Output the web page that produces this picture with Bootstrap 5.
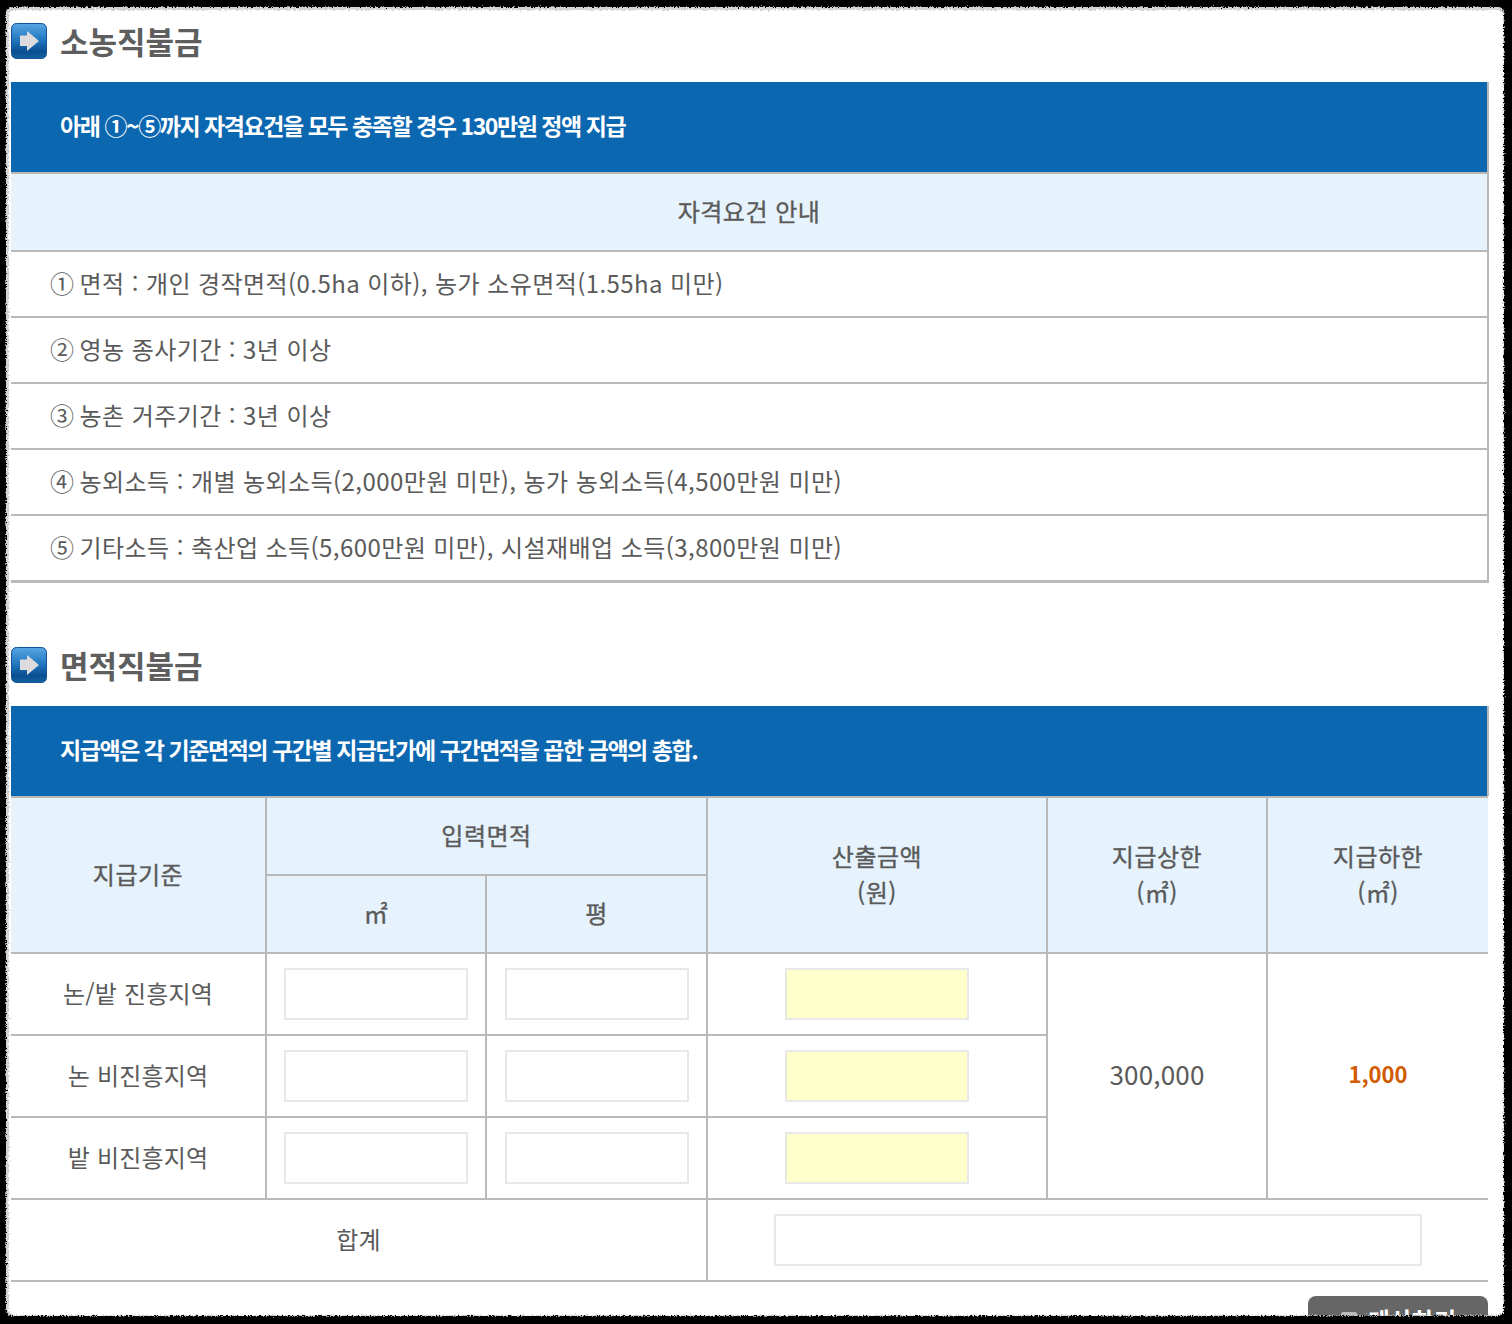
<!DOCTYPE html>
<html lang="ko">
<head>
<meta charset="utf-8">
<title>직불금 계산</title>
<link href="https://cdn.jsdelivr.net/npm/bootstrap@5.3.0/dist/css/bootstrap.min.css" rel="stylesheet">
<style>
html,body{height:1324px;overflow:hidden;background:#000;}
body{font-family:"Noto Sans CJK KR","Noto Sans",sans-serif;color:#5a5a5a;}
.sheet{margin:7px 8px 8px 6px;height:1309px;overflow:hidden;background:#fff;padding:16px 15px 0 5px;}
.edge{position:fixed;left:0;top:0;width:1512px;height:1324px;pointer-events:none;}
.sec-title{height:36px;margin-bottom:23px;gap:13px;}
.sec-title svg{width:36px;height:36px;flex:none;}
.sec-title h2{font-size:31px;font-weight:700;margin:0;color:#5e5e5e;line-height:36px;}
.sec-two{margin-top:64px;}
.notice{height:90px;background:#0c67b1;color:#fff;font-size:23px;font-weight:700;letter-spacing:-1.45px;padding:0 0 3px 49px;border-right:2px solid #b9b9b9;}
.req-table,.calc-table{table-layout:fixed;border-collapse:separate;border-spacing:0;margin:0;}
.req-table{width:100%;border-right:2px solid #b9b9b9;}
.calc-table{width:1477px;}
.req-table th,.calc-table th{background:#e6f3fd;font-size:24px;font-weight:400;letter-spacing:.5px;-webkit-text-stroke:.35px #5a5a5a;text-align:center;color:#5a5a5a;vertical-align:middle;padding:0 0 2px;}
.req-table th,.req-table td,.calc-table th,.calc-table td{border-bottom:2px solid #b9b9b9;}
.req-table th{border-top:2px solid #b9b9b9;height:80px;}
.req-table td{height:66px;font-size:24px;letter-spacing:.42px;padding:0 0 2px 39px;vertical-align:middle;color:#5a5a5a;}
.req-table tr:last-child td{border-bottom-width:3px;height:67px;}
.marker{letter-spacing:-1.6px;}
.calc-table th.head-top{border-top:2px solid #b9b9b9;}
.calc-table td{font-size:24px;letter-spacing:.2px;text-align:center;vertical-align:middle;padding:0;color:#5a5a5a;height:82px;}
.calc-table td.label-cell{padding-bottom:2px;}
.calc-table th.vline,.calc-table td.vline{border-right:2px solid #b9b9b9;}
.calc-table input.form-control{display:block;width:184px;height:52px;margin:0 auto;border:2px solid #e8e8e8;border-radius:0;background:#fff;padding:0 8px;}
.calc-table input.form-control.yellow{background:#ffffcc;}
.calc-table input.form-control.total{width:648px;margin-left:66px;}
.calc-table td.floor-val{color:#d15b00;font-weight:700;font-size:22px;letter-spacing:0;padding-bottom:6px;}
.calc-table td.ceil-val{font-size:26px;letter-spacing:.2px;padding-bottom:6px;}
.h-r1{height:80px;}
.h-r2{height:78px;}
.btn-row{margin-top:14px;width:1477px;}
.calc-btn.btn{width:180px;height:48px;background:#666;color:#fff;border:0;border-radius:8px 8px 0 0;font-size:24px;font-weight:700;padding:0;gap:10px;}
.calc-btn svg{width:18px;height:18px;}
</style>
</head>
<body>
<div class="sheet">
  <div class="sec-title d-flex align-items-center">
    <svg viewBox="0 0 36 36"><defs><linearGradient id="g1" x1="0" y1="0" x2="0" y2="1"><stop offset="0" stop-color="#58a6e4"/><stop offset=".5" stop-color="#1e74bd"/><stop offset=".8" stop-color="#0a4f90"/><stop offset="1" stop-color="#15629f"/></linearGradient><filter id="soft"><feGaussianBlur stdDeviation=".6"/></filter></defs><rect x=".5" y=".5" width="35" height="35" rx="5" fill="url(#g1)" stroke="#0d5597"/><path d="M9 12.5h7V8l12 10-12 10v-5h-7z" fill="#dcdcdc" filter="url(#soft)"/></svg>
    <h2>소농직불금</h2>
  </div>
  <div class="notice d-flex align-items-center">아래 ①~⑤까지 자격요건을 모두 충족할 경우 130만원 정액 지급</div>
  <table class="req-table">
    <thead><tr><th>자격요건 안내</th></tr></thead>
    <tbody>
      <tr><td><span class="marker">①</span> 면적 : 개인 경작면적(0.5ha 이하), 농가 소유면적(1.55ha 미만)</td></tr>
      <tr><td><span class="marker">②</span> 영농 종사기간 : 3년 이상</td></tr>
      <tr><td><span class="marker">③</span> 농촌 거주기간 : 3년 이상</td></tr>
      <tr><td><span class="marker">④</span> 농외소득 : 개별 농외소득(2,000만원 미만), 농가 농외소득(4,500만원 미만)</td></tr>
      <tr><td><span class="marker">⑤</span> 기타소득 : 축산업 소득(5,600만원 미만), 시설재배업 소득(3,800만원 미만)</td></tr>
    </tbody>
  </table>

  <div class="sec-title sec-two d-flex align-items-center">
    <svg viewBox="0 0 36 36"><rect x=".5" y=".5" width="35" height="35" rx="5" fill="url(#g1)" stroke="#0d5597"/><path d="M9 12.5h7V8l12 10-12 10v-5h-7z" fill="#dcdcdc" filter="url(#soft)"/></svg>
    <h2>면적직불금</h2>
  </div>
  <div class="notice d-flex align-items-center">지급액은 각 기준면적의 구간별 지급단가에 구간면적을 곱한 금액의 총합.</div>
  <table class="calc-table">
    <colgroup><col style="width:256px"><col style="width:220px"><col style="width:221px"><col style="width:340px"><col style="width:220px"><col></colgroup>
    <thead>
      <tr class="h-r1">
        <th rowspan="2" class="head-top vline">지급기준</th>
        <th colspan="2" class="head-top vline">입력면적</th>
        <th rowspan="2" class="head-top vline">산출금액<br>(원)</th>
        <th rowspan="2" class="head-top vline">지급상한<br>(㎡)</th>
        <th rowspan="2" class="head-top">지급하한<br>(㎡)</th>
      </tr>
      <tr class="h-r2">
        <th class="vline">㎡</th>
        <th class="vline">평</th>
      </tr>
    </thead>
    <tbody>
      <tr>
        <td class="vline label-cell">논/밭 진흥지역</td>
        <td class="vline"><input class="form-control" type="text" aria-label="㎡"></td>
        <td class="vline"><input class="form-control" type="text" aria-label="평"></td>
        <td class="vline"><input class="form-control yellow" type="text" aria-label="산출금액"></td>
        <td rowspan="3" class="vline ceil-val">300,000</td>
        <td rowspan="3" class="floor-val">1,000</td>
      </tr>
      <tr>
        <td class="vline label-cell">논 비진흥지역</td>
        <td class="vline"><input class="form-control" type="text" aria-label="㎡"></td>
        <td class="vline"><input class="form-control" type="text" aria-label="평"></td>
        <td class="vline"><input class="form-control yellow" type="text" aria-label="산출금액"></td>
      </tr>
      <tr>
        <td class="vline label-cell">밭 비진흥지역</td>
        <td class="vline"><input class="form-control" type="text" aria-label="㎡"></td>
        <td class="vline"><input class="form-control" type="text" aria-label="평"></td>
        <td class="vline"><input class="form-control yellow" type="text" aria-label="산출금액"></td>
      </tr>
      <tr>
        <td colspan="3" class="vline label-cell">합계</td>
        <td colspan="3" class="text-start"><input class="form-control total" type="text" aria-label="합계"></td>
      </tr>
    </tbody>
  </table>
  <div class="btn-row d-flex justify-content-end">
    <button class="calc-btn btn d-flex align-items-center justify-content-center" type="button"><svg viewBox="0 0 18 18"><rect x="1" y="1" width="16" height="16" rx="2" fill="#bbb"/><rect x="4" y="4" width="10" height="3" fill="#666"/></svg>계산하기</button>
  </div>
</div>
<svg class="edge" viewBox="0 0 1512 1324" aria-hidden="true">
  <defs>
    <filter id="rough" x="0" y="0" width="100%" height="100%" filterUnits="userSpaceOnUse" primitiveUnits="userSpaceOnUse">
      <feTurbulence type="fractalNoise" baseFrequency=".6" numOctaves="2" seed="4"/>
      <feDisplacementMap in="SourceGraphic" scale="5" xChannelSelector="R" yChannelSelector="G"/>
    </filter>
  </defs>
  <path filter="url(#rough)" fill="#c4c4c4" opacity=".75" fill-rule="evenodd" d="M-10-10H1522V1334H-10ZM14 10H1498a6 6 0 0 1 5 5V1310a6 6 0 0 1-5 5H14a6 6 0 0 1-5-5V15a6 6 0 0 1 5-5Z"/>
  <path filter="url(#rough)" fill="#000" fill-rule="evenodd" d="M-10-10H1522V1334H-10ZM12 7H1498a6 6 0 0 1 6 6V1310a6 6 0 0 1-6 6H12a6 6 0 0 1-6-6V13a6 6 0 0 1 6-6Z"/>
</svg>
<script src="https://cdn.jsdelivr.net/npm/bootstrap@5.3.0/dist/js/bootstrap.bundle.min.js"></script>
</body>
</html>
